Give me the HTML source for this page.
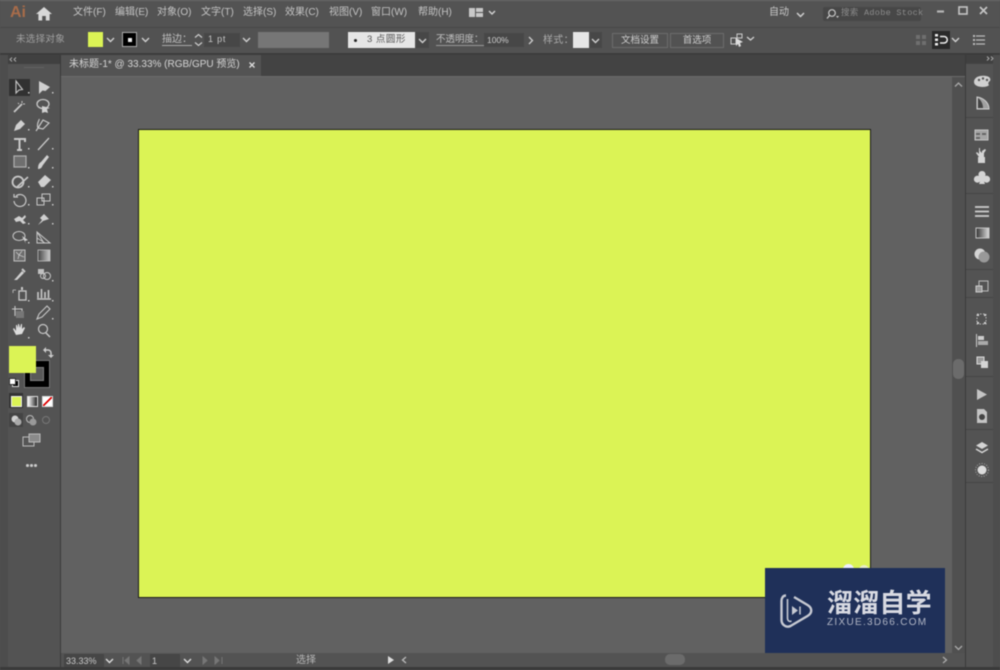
<!DOCTYPE html>
<html><head><meta charset="utf-8"><style>
html,body{margin:0;padding:0;background:#535353;}
#r{position:relative;width:1000px;height:670px;overflow:hidden;background:#535353;font-family:"Liberation Sans","Noto Sans CJK SC",sans-serif;color:#d0d0d0;font-size:10px;filter:blur(.45px);}
#r div{position:absolute;}
.t{white-space:nowrap;line-height:12px;}
svg{position:absolute;overflow:visible;}
</style></head><body><div id="r">

<!-- bars -->
<div style="left:0;top:0;width:1000px;height:27px;background:#535353"></div>
<div style="left:0;top:27px;width:1000px;height:26px;background:#525252;border-top:1px solid #484848;box-sizing:border-box"></div>
<div style="left:0;top:53px;width:1000px;height:2px;background:#3c3c3c"></div>
<div style="left:0;top:0;width:1000px;height:1px;background:#6a6a6a"></div>

<!-- logo and menu -->
<div class="t" style="left:10px;top:4px;font-size:16px;line-height:18px;color:#a86c4a;font-weight:bold">Ai</div>
<svg style="left:36px;top:7px" width="16" height="14"><path d="M8 0L0 7h2.400v6.500h3.800V9h3.600v4.500h3.800V7H16z" fill="#d8d8d8"/></svg>
<div class="t" style="left:73px;top:7px;color:#c4c4c4">文件(F)</div>
<div class="t" style="left:115px;top:7px;color:#c4c4c4">编辑(E)</div>
<div class="t" style="left:157px;top:7px;color:#c4c4c4">对象(O)</div>
<div class="t" style="left:201px;top:7px;color:#c4c4c4">文字(T)</div>
<div class="t" style="left:243px;top:7px;color:#c4c4c4">选择(S)</div>
<div class="t" style="left:285px;top:7px;color:#c4c4c4">效果(C)</div>
<div class="t" style="left:329px;top:7px;color:#c4c4c4">视图(V)</div>
<div class="t" style="left:371px;top:7px;color:#c4c4c4">窗口(W)</div>
<div class="t" style="left:418px;top:7px;color:#c4c4c4">帮助(H)</div>
<svg style="left:469px;top:8px" width="28" height="10"><path d="M0 0h6v9H0zM7 0h7v4H7zM7 5h7v4H7z" fill="#c8c8c8"/><path d="M20 3l3 3 3-3" fill="none" stroke="#d0d0d0" stroke-width="1.500"/></svg>

<div class="t" style="left:769px;top:7px;color:#c8c8c8">自动</div>
<svg style="left:796px;top:12px" width="9" height="6"><path d="M1 1l3.500 3.500L8 1" fill="none" stroke="#d0d0d0" stroke-width="1.500"/></svg>
<div style="left:823px;top:7px;width:98px;height:14px;background:#474747;border-radius:2px"></div>
<svg style="left:825px;top:8px" width="14" height="12"><circle cx="7" cy="5" r="3.300" fill="none" stroke="#c8c8c8" stroke-width="1.200"/><path d="M4.500 7.500L2 10.500" stroke="#c8c8c8" stroke-width="1.300"/><path d="M11 8h3l-1.500 2z" fill="#c8c8c8"/></svg>
<div class="t" style="left:841px;top:7px;font-size:8.500px;letter-spacing:.3px;color:#8c8c8c;font-family:'Liberation Mono','Noto Sans CJK SC',monospace">搜索 Adobe Stock</div>
<svg style="left:936px;top:5px" width="60" height="14"><path d="M1 6.500h7" stroke="#b5b5b5" stroke-width="2.200"/><rect x="23" y="2" width="8" height="7" fill="none" stroke="#c5c5c5" stroke-width="1.600"/><path d="M44 2l7 7M51 2l-7 7" stroke="#c5c5c5" stroke-width="1.700"/></svg>

<!-- control bar -->
<div class="t" style="left:16px;top:34px;color:#a0a0a0;font-size:9.500px;letter-spacing:.3px">未选择对象</div>
<div style="left:88px;top:32px;width:15px;height:15px;background:#dbf355"></div>
<svg style="left:106px;top:37px" width="9" height="6"><path d="M1 1l3.500 3.500L8 1" fill="none" stroke="#d0d0d0" stroke-width="1.400"/></svg>
<div style="left:122px;top:32px;width:15px;height:15px;background:#000;border:1px solid #aaa;box-sizing:border-box"></div>
<div style="left:128px;top:38px;width:4px;height:4px;background:#eee"></div>
<svg style="left:141px;top:37px" width="9" height="6"><path d="M1 1l3.500 3.500L8 1" fill="none" stroke="#d0d0d0" stroke-width="1.400"/></svg>
<div class="t" style="left:162px;top:34px;color:#c0c0c0;border-bottom:1px solid #aaa;line-height:11px">描边：</div>
<svg style="left:194px;top:33px" width="9" height="14"><path d="M1 4.500L4.500 1.500 8 4.500M1 9.500l3.500 3 3.500-3" fill="none" stroke="#ccc" stroke-width="1.200"/></svg>
<div style="left:204px;top:33px;width:36px;height:14px;background:#474747"></div>
<div class="t" style="left:208px;top:33px;font-size:9px;letter-spacing:.8px;color:#c8c8c8">1 pt</div>
<svg style="left:242px;top:37px" width="9" height="6"><path d="M1 1l3.500 3.500L8 1" fill="none" stroke="#d0d0d0" stroke-width="1.400"/></svg>
<div style="left:258px;top:32px;width:71px;height:16px;background:#767676"></div>
<div style="left:348px;top:32px;width:67px;height:16px;background:#e6e6e6"></div>
<div style="left:354px;top:39px;width:3px;height:3px;background:#222;border-radius:50%"></div>
<div class="t" style="left:367px;top:34px;font-size:9.500px;color:#555;letter-spacing:.5px">3 点圆形</div>
<div style="left:416px;top:32px;width:13px;height:16px;background:#474747"></div>
<svg style="left:418px;top:38px" width="9" height="6"><path d="M1 1l3.500 3.500L8 1" fill="none" stroke="#d0d0d0" stroke-width="1.400"/></svg>
<div class="t" style="left:436px;top:34px;color:#c0c0c0;border-bottom:1px solid #999;line-height:11px;font-size:9.500px">不透明度：</div>
<div style="left:484px;top:33px;width:40px;height:14px;background:#474747"></div>
<div class="t" style="left:487px;top:34px;font-size:8.500px;color:#ccc">100%</div>
<svg style="left:528px;top:36px" width="6" height="9"><path d="M1 1l3.500 3.500L1 8" fill="none" stroke="#ccc" stroke-width="1.300"/></svg>
<div class="t" style="left:543px;top:35px;color:#ababab;letter-spacing:.3px">样式：</div>
<div style="left:573px;top:32px;width:16px;height:16px;background:#e6e6e6"></div>
<div style="left:590px;top:32px;width:12px;height:16px;background:#474747"></div>
<svg style="left:591px;top:38px" width="9" height="6"><path d="M1 1l3.500 3.500L8 1" fill="none" stroke="#d0d0d0" stroke-width="1.400"/></svg>
<div class="t" style="left:612px;top:33px;width:54px;height:13px;border:1px solid #6c6c6c;text-align:center;color:#cfcfcf;line-height:14px;font-size:9.500px">文档设置</div>
<div class="t" style="left:670px;top:33px;width:52px;height:13px;border:1px solid #6c6c6c;text-align:center;color:#cfcfcf;line-height:14px;font-size:9.500px">首选项</div>
<svg style="left:730px;top:33px" width="26" height="14"><path d="M1 5h5v6H1z" fill="none" stroke="#ccc"/><path d="M7 1h5v4H7z" fill="none" stroke="#ccc"/><path d="M6 5l7 4-3 1 1 3-2 1-1-3-2 2z" fill="#ddd"/><path d="M17 4l3.500 3L24 4" fill="none" stroke="#d0d0d0" stroke-width="1.300"/></svg>
<svg style="left:916px;top:35px" width="10" height="10"><path d="M0 0h4v4H0zM6 0h4v4H6zM0 6h4v4H0zM6 6h4v4H6z" fill="#6f6f6f"/></svg>
<div style="left:932px;top:31px;width:18px;height:18px;background:#2a2a2a"></div>
<svg style="left:935px;top:34px" width="13" height="12"><path d="M0 0h3v2.500H0zM0 4.500h3V7H0zM0 9h3v2.500H0z" fill="#eee"/><path d="M5 2.500h4a2.500 2.500 0 0 1 0 6.500H5" fill="none" stroke="#eee" stroke-width="1.500"/></svg>
<svg style="left:951px;top:37px" width="9" height="6"><path d="M1 1l3.500 3.500L8 1" fill="none" stroke="#d0d0d0" stroke-width="1.400"/></svg>
<svg style="left:973px;top:35px" width="12" height="10"><path d="M3 1h9M3 5h9M3 9h9" stroke="#bbb" stroke-width="1.300"/><path d="M0 0h2v2H0zM0 4h2v2H0zM0 8h2v2H0z" fill="#bbb"/></svg>

<!-- canvas -->
<div style="left:61px;top:55px;width:904px;height:598px;background:#616161"></div>
<div style="left:61px;top:55px;width:904px;height:21px;background:#434343"></div>
<div style="left:61px;top:55px;width:200px;height:21px;background:#535353"></div>
<div class="t" style="left:69px;top:59px;color:#d5d5d5;font-size:10px">未标题-1* @ 33.33% (RGB/GPU 预览)</div>
<svg style="left:249px;top:62px" width="6" height="6"><path d="M.5.500l5 5M5.500.500l-5 5" stroke="#ddd" stroke-width="1.300"/></svg>
<div style="left:61px;top:76px;width:904px;height:1px;background:#6a6a6a"></div>

<!-- artboard -->
<div style="left:138px;top:129px;width:733px;height:469px;background:#dbf355;border:1px solid #1a1a1a;box-sizing:border-box"></div>
<div style="left:843px;top:564px;width:11px;height:11px;background:#eef;border-radius:50%"></div>
<div style="left:859px;top:565px;width:10px;height:10px;background:#e9edc8;border-radius:50%"></div>

<!-- v scroll -->
<div style="left:952px;top:77px;width:13px;height:576px;background:#505050"></div>
<div style="left:953px;top:359px;width:11px;height:20px;background:#6b6b6b;border-radius:5px"></div>
<svg style="left:954px;top:82px" width="9" height="6"><path d="M1 4.500L4.500 1 8 4.500" fill="none" stroke="#aaa" stroke-width="1.300"/></svg>
<svg style="left:954px;top:645px" width="9" height="6"><path d="M1 1l3.500 3.500L8 1" fill="none" stroke="#aaa" stroke-width="1.300"/></svg>

<!-- status -->
<div style="left:61px;top:653px;width:891px;height:14px;background:#535353"></div>
<div style="left:0;top:667px;width:1000px;height:3px;background:#3a3a3a"></div>
<div style="left:64px;top:654px;width:40px;height:13px;background:#464646"></div>
<div class="t" style="left:66px;top:655px;font-size:9px;color:#c8c8c8">33.33%</div>
<svg style="left:105px;top:658px" width="9" height="6"><path d="M1 1l3.500 3.500L8 1" fill="none" stroke="#ddd" stroke-width="1.400"/></svg>
<svg style="left:122px;top:656px" width="24" height="9"><path d="M1 1v7M7 1L3 4.500 7 8zM19 1l-4 3.500L19 8z" fill="#767676" stroke="#767676"/></svg>
<div style="left:150px;top:654px;width:30px;height:13px;background:#464646"></div>
<div class="t" style="left:152px;top:655px;font-size:9px;color:#ccc">1</div>
<svg style="left:183px;top:658px" width="9" height="6"><path d="M1 1l3.500 3.500L8 1" fill="none" stroke="#ddd" stroke-width="1.400"/></svg>
<svg style="left:201px;top:656px" width="24" height="9"><path d="M2 1l4 3.500L2 8zM14 1l4 3.500L14 8zM21 1v7" fill="#767676" stroke="#767676"/></svg>
<div class="t" style="left:296px;top:655px;font-size:10px;color:#b8b8b8">选择</div>
<svg style="left:388px;top:656px" width="6" height="8"><path d="M0 0l6 4-6 4z" fill="#ddd"/></svg>
<svg style="left:401px;top:656px" width="6" height="8"><path d="M5 1L1.500 4 5 7" fill="none" stroke="#bbb" stroke-width="1.300"/></svg>
<div style="left:665px;top:654px;width:20px;height:11px;background:#6b6b6b;border-radius:5px"></div>
<svg style="left:942px;top:656px" width="6" height="8"><path d="M1 1l3.500 3L1 7" fill="none" stroke="#aaa" stroke-width="1.300"/></svg>

<!-- left toolbar -->
<div style="left:0;top:55px;width:8px;height:612px;background:#4d4d4d"></div>
<div style="left:8px;top:55px;width:52px;height:612px;background:#535353"></div>
<div style="left:8px;top:55px;width:52px;height:9px;background:#404040"></div>
<div style="left:24px;top:67px;width:20px;height:1px;background:#626262"></div>
<div style="left:60px;top:55px;width:1px;height:612px;background:#3a3a3a"></div>
<div style="left:9px;top:79px;width:21px;height:17px;background:#313131"></div>
<svg style="left:0;top:0" width="60" height="480" fill="none" stroke="#c8c8c8">
<path d="M16 81v12l3-3 3.500-.5z" stroke-width="1.100"/>
<path d="M39 81v13l3.500-3.500 3 .5L50 87z" fill="#d0d0d0" stroke="none"/>
<path d="M14 112l8-8" stroke-width="1.800"/><path d="M22 101v2M18 103l1 1M25 104h-2" stroke-width="1"/>
<ellipse cx="43" cy="104" rx="6" ry="4.500" stroke-width="1.300"/><path d="M42 106l8 2-3 1 1 4-3-1-3 1z" fill="#d0d0d0" stroke="none"/>
<path d="M14 131l2-6 5-5 4 4-5 5z" fill="#d0d0d0" stroke="none"/><path d="M36 131l2-3c-2-5 2-8 1-9M38 128l5-8 6 3-6 6z" stroke-width="1.200"/>
<path d="M14 139h11v3M19.500 139v11M17 150h5" stroke-width="2"/>
<path d="M38 150l11-12" stroke-width="1.300"/>
<rect x="14" y="156" width="12" height="11" fill="#6f6f6f" stroke="#b0b0b0" stroke-width="1.200"/>
<path d="M38 169c4 0 4-3 5-4l6-8-2-2-6 7c-2 1-3 3-3 7z" fill="#d0d0d0" stroke="none"/>
<circle cx="18" cy="182" r="5.500" stroke-width="1.800"/><path d="M17 187l11-10" stroke-width="1.600"/>
<path d="M38 182l7-7 6 5-7 7-3 0z" fill="#d0d0d0" stroke="none"/>
<path d="M14 201a6 6 0 1 0 2-5M14 194v3h4" stroke-width="1.200"/>
<rect x="37" y="198" width="7" height="7" stroke-width="1"/><rect x="42" y="194" width="8" height="7" stroke-width="1"/>
<path d="M14 219l5-3 3 2 3-3 1 2-3 3 3 3-3 1-3-3-4 1z" fill="#d0d0d0" stroke="none"/>
<path d="M38 225l4-5-2-2 4-4 5 5-3 1-3 1-1 1z" fill="#d0d0d0" stroke="none"/>
<ellipse cx="19" cy="236" rx="6" ry="4.500" stroke-width="1"/><path d="M22 236l6 4-3 1 1 3z" fill="#d0d0d0" stroke="none"/>
<path d="M37 232v11h13zM37 232l7 11M37 238l8 5" stroke-width="1"/>
<rect x="14" y="250" width="11" height="11" fill="#6d6d6d" stroke="#c0c0c0"/><path d="M16 252l3 3-1 4M22 251l-3 4 5 2" stroke-width=".8"/>
<rect x="38" y="250" width="12" height="11" fill="url(#h)" stroke="#c0c0c0" stroke-width=".8"/>
<path d="M14 280l2-2 6-7 2 2-7 7z" fill="#d0d0d0" stroke="none"/><path d="M22 269l3 3" stroke-width="2"/>
<rect x="38" y="269" width="6" height="5" fill="#c0c0c0" stroke="none"/><circle cx="47" cy="276" r="3.500" stroke-width="1"/><circle cx="43" cy="276" r="2.500" stroke-width="1"/>
<path d="M13 290h3M13 290v3" stroke-width=".8"/><rect x="19" y="291" width="7" height="9" stroke-width="1.300"/><path d="M22 287v3" stroke-width="2"/>
<path d="M37 299h14M38 298v-6M41.500 298v-9M45 298v-6M48.500 298v-8" stroke-width="1.600"/>
<path d="M12 309h10v9M15 306v10" stroke-width="1.100"/><rect x="16" y="311" width="8" height="7" fill="#777" stroke="none"/>
<path d="M37 319l2-5 8-8 3 3-8 8z" stroke-width="1.100"/>
<path d="M16 335l-3-6 1-1 2 3v-6l1 0 1 3v-4h1l1 4 1-4h1v5l2-2 1 1-3 6z" fill="#dcdcdc" stroke="none"/>
<circle cx="43" cy="329" r="4.500" stroke-width="1.200"/><path d="M46 333l4 4" stroke-width="1.500"/>
<defs><linearGradient id="h"><stop offset="0" stop-color="#444"/><stop offset="1" stop-color="#ccc"/></linearGradient></defs>
</svg>
<svg style="left:0;top:0" width="60" height="340" fill="#c8c8c8">
<rect x="28" y="92" width="1.500" height="1.500"/><rect x="52" y="92" width="1.500" height="1.500"/><rect x="28" y="129" width="1.500" height="1.500"/><rect x="28" y="148" width="1.500" height="1.500"/><rect x="52" y="148" width="1.500" height="1.500"/><rect x="28" y="167" width="1.500" height="1.500"/><rect x="52" y="167" width="1.500" height="1.500"/><rect x="28" y="186" width="1.500" height="1.500"/><rect x="52" y="186" width="1.500" height="1.500"/><rect x="28" y="204" width="1.500" height="1.500"/><rect x="52" y="204" width="1.500" height="1.500"/><rect x="28" y="223" width="1.500" height="1.500"/><rect x="52" y="223" width="1.500" height="1.500"/><rect x="28" y="242" width="1.500" height="1.500"/><rect x="52" y="280" width="1.500" height="1.500"/><rect x="28" y="300" width="1.500" height="1.500"/><rect x="52" y="300" width="1.500" height="1.500"/><rect x="52" y="318" width="1.500" height="1.500"/><rect x="28" y="337" width="1.500" height="1.500"/>
</svg>
<svg style="left:9px;top:57px" width="8" height="5"><path d="M3 .500L1 2.500 3 4.500M7 .500L5 2.500 7 4.500" fill="none" stroke="#aaa"/></svg>

<!-- fill stroke -->
<div style="left:24px;top:360px;width:26px;height:28px;background:#000;border:1px solid #777;box-sizing:border-box"></div>
<div style="left:30px;top:367px;width:14px;height:14px;background:#595959;border:1px solid #808080;box-sizing:border-box"></div>
<div style="left:9px;top:346px;width:27px;height:27px;background:#dbf355"></div>
<svg style="left:43px;top:347px" width="10" height="11"><path d="M1 3h4a3 3 0 0 1 3 3v4" fill="none" stroke="#ccc" stroke-width="1.500"/><path d="M3 0v6L0 3zM5 8h6l-3 3z" fill="#ccc"/></svg>
<div style="left:12px;top:380px;width:5px;height:5px;background:#000;border:1px solid #ddd"></div>
<div style="left:9px;top:378px;width:5px;height:5px;background:#fff;border:1px solid #333"></div>
<div style="left:9px;top:393px;width:14px;height:15px;background:#333"></div>
<div style="left:11px;top:396px;width:9px;height:9px;background:#dbf355;border:1px solid #eee"></div>
<div style="left:27px;top:396px;width:9px;height:9px;background:linear-gradient(90deg,#fff,#222);border:1px solid #ddd"></div>
<div style="left:42px;top:396px;width:9px;height:9px;background:linear-gradient(135deg,#fff 42%,#d00 42%,#d00 58%,#fff 58%);border:1px solid #ddd"></div>
<div style="left:9px;top:413px;width:14px;height:14px;background:#444"></div>
<svg style="left:0;top:0" width="60" height="480"><circle cx="15" cy="419" r="3.500" fill="#d0d0d0"/><circle cx="18" cy="422" r="3.500" fill="#aaa"/><circle cx="30" cy="419" r="3.500" fill="none" stroke="#bbb"/><circle cx="33" cy="422" r="3.500" fill="#999"/><circle cx="46" cy="420" r="3.500" fill="none" stroke="#777"/><rect x="23" y="437" width="11" height="9" fill="#555" stroke="#bbb"/><rect x="29" y="434" width="11" height="8" fill="#8a8a8a" stroke="#bbb"/></svg>
<div style="left:26px;top:464px;width:3px;height:2.500px;background:#ccc;border-radius:50%"></div>
<div style="left:30px;top:464px;width:3px;height:2.500px;background:#ccc;border-radius:50%"></div>
<div style="left:34px;top:464px;width:3px;height:2.500px;background:#ccc;border-radius:50%"></div>

<!-- right panels -->
<div style="left:965px;top:55px;width:35px;height:612px;background:#454545"></div>
<div style="left:965px;top:55px;width:1px;height:612px;background:#3a3a3a"></div>
<div style="left:966px;top:55px;width:27px;height:8px;background:#404040"></div>
<div style="left:966px;top:64px;width:27px;height:53px;background:#535353"></div>
<div style="left:966px;top:118px;width:27px;height:75px;background:#535353"></div>
<div style="left:966px;top:194px;width:27px;height:75px;background:#535353"></div>
<div style="left:966px;top:270px;width:27px;height:27px;background:#535353"></div>
<div style="left:966px;top:298px;width:27px;height:78px;background:#535353"></div>
<div style="left:966px;top:377px;width:27px;height:52px;background:#535353"></div>
<div style="left:966px;top:430px;width:27px;height:52px;background:#535353"></div>
<div style="left:966px;top:483px;width:27px;height:184px;background:#535353"></div>
<div style="left:993px;top:55px;width:7px;height:612px;background:#4d4d4d"></div>
<svg style="left:986px;top:56px" width="8" height="5"><path d="M1 .500L3 2.500 1 4.500M5 .500L7 2.500 5 4.500" fill="none" stroke="#aaa"/></svg>
<svg style="left:0;top:0" width="1000" height="480">
<path d="M974 82c0-5 6-7 12-6 4 .5 5 3 4 5-2 1-2 3-1 4-2 3-15 3-15-3z" fill="#d0d0d0"/>
<circle cx="979" cy="80" r="1.200" fill="#555"/><circle cx="983" cy="78.500" r="1.200" fill="#555"/><circle cx="987" cy="80" r="1.200" fill="#555"/>
<path d="M977 110h12c0-6-5-12-12-13z" fill="#9a9a9a" stroke="#ddd" transform="translate(0,-13)" opacity="0"/>
<path d="M977 109h12c0-6-5-11-12-12z" fill="#a0a0a0" stroke="#d0d0d0"/><path d="M978 98v10h5c0-4-2-8-5-10z" fill="#444"/>
<rect x="975" y="130" width="13" height="10" fill="#a5a5a5" stroke="#c4c4c4"/><path d="M976 133h4v2h-4zM982 133h4v2h-4zM976 137h4v2h-4z" fill="#666"/>
<path d="M979 162v-5l-3-4 1-1 2 2v-6h1v3l2 2v-2l3-2 1 1-2 3 0 4v5z" fill="#d4d4d4"/><rect x="978" y="157" width="7" height="6" fill="#d4d4d4"/>
<path d="M982 171a3.500 3.500 0 0 1 3.200 5 3.500 3.500 0 1 1-1.200 5.500l1 2.500h-6l1-2.500a3.500 3.500 0 1 1-1.200-5.500 3.500 3.500 0 0 1 3.200-5z" fill="#d4d4d4"/>
<path d="M975 207h14M975 211.500h14M975 216h14" stroke="#cfcfcf" stroke-width="1.800"/>
<defs><linearGradient id="g"><stop offset="0" stop-color="#333"/><stop offset="1" stop-color="#ddd"/></linearGradient></defs>
<rect x="976" y="228" width="13" height="10" fill="url(#g)" stroke="#c4c4c4"/>
<circle cx="980" cy="254" r="5.500" fill="#d4d4d4"/><circle cx="984" cy="257" r="5.500" fill="#999"/>
<rect x="979" y="281" width="9" height="10" fill="none" stroke="#bbb"/><rect x="976" y="286" width="6" height="6" fill="#999" stroke="#ccc"/>
<path d="M977 314h2v2h-2zM984 314h2v2h-2zM977 322h2v2h-2zM984 322h2v2h-2z" fill="#d4d4d4"/><path d="M977 314h9v10h-9z" fill="none" stroke="#bbb" stroke-dasharray="1.500 1.500"/>
<path d="M976.500 334v13" stroke="#ccc"/><path d="M978 336h6v4h-6z" fill="#ccc"/><path d="M978 341h10v4h-10z" fill="#aaa"/>
<rect x="977" y="357" width="7" height="7" fill="#999" stroke="#ddd"/><rect x="981" y="361" width="7" height="7" fill="#d4d4d4"/>
<path d="M977 389v11l10-5.500z" fill="#c4c4c4"/>
<path d="M977 409h7l3 3v11h-10z" fill="#c4c4c4"/><circle cx="982" cy="417" r="3" fill="#444"/>
<path d="M982 442l6 3.500-6 3.500-6-3.500z" fill="#d4d4d4"/><path d="M976 449l6 3.500 6-3.500" fill="none" stroke="#d4d4d4" stroke-width="1.500"/>
<circle cx="982" cy="470" r="4.500" fill="#dcdcdc"/><circle cx="982" cy="470" r="6.500" fill="none" stroke="#aaa" stroke-dasharray="1 1.500"/>
</svg>

<!-- watermark -->
<div style="left:765px;top:568px;width:180px;height:85px;background:#1f3059"></div>
<svg style="left:780px;top:593px" width="34" height="36" fill="none" stroke="#c6c9d2" stroke-linejoin="round"><path d="M6 2.500C3 2.500 1.500 5 1.500 8v19c0 5 5 8 9 6l17-10c5-3 5-8 0-11L14 4" stroke-width="2.400"/><path d="M7.500 6v19c0 3 2 4 4 3" stroke-width="1.600"/><path d="M12 13v9l6-4.500z" fill="#c6c9d2" stroke="none"/><path d="M20 13.500v8" stroke-width="1.500"/></svg>
<div class="t" style="left:827px;top:589px;font-size:26px;line-height:29px;font-weight:bold;color:#d8dae2;letter-spacing:.2px">溜溜自学</div>
<div class="t" style="left:827px;top:617px;font-size:10px;letter-spacing:1.300px;color:#b0b5c4;line-height:12px">ZIXUE.3D66.COM</div>
</div></body></html>
